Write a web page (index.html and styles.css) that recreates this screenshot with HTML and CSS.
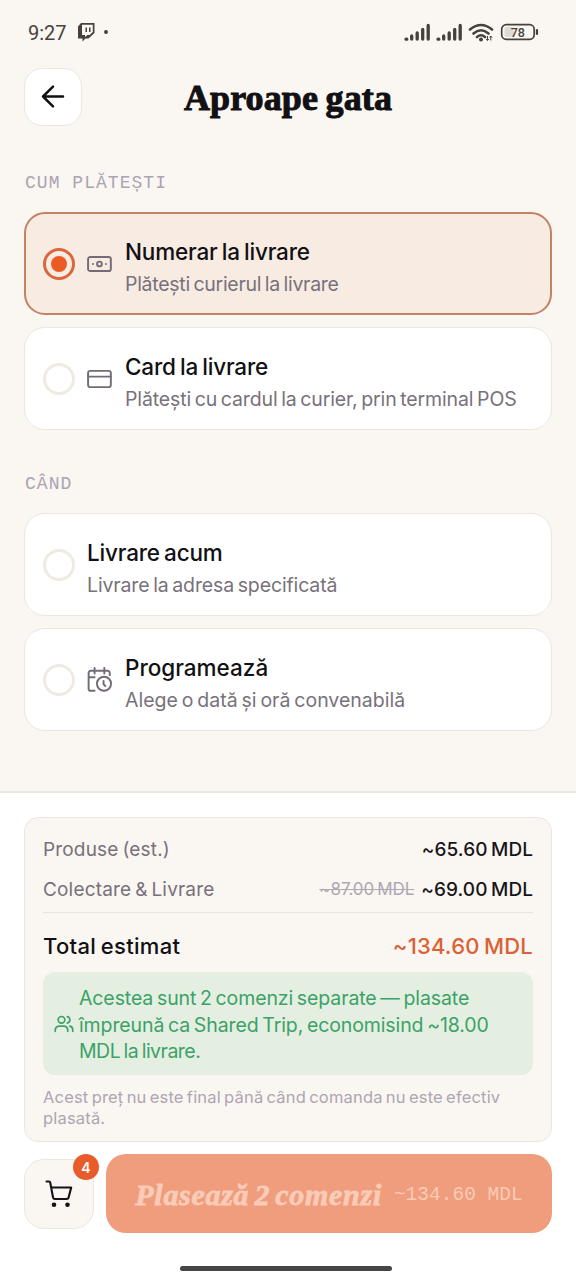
FILE: index.html
```html
<!DOCTYPE html>
<html lang="ro">
<head>
<meta charset="utf-8">
<title>Aproape gata</title>
<link rel="stylesheet" href="styles.css">
</head>
<body>
<div class="screen">
  <div class="status">
    <span class="clock">9:27</span>
    <svg class="twitch" width="18" height="20" viewBox="0 0 18 20"><path fill="#45423d" fill-rule="evenodd" d="M4 1H17.500V11L11.500 16.500H8.500L5.500 19.500V16.500H1V4.500ZM5 2.800V13H8V15L10.500 13H12.500L15.800 10V2.800ZM8.500 5.500H10V10H8.500ZM12 5.500H13.500V10H12Z"/></svg>
    <span class="dot"></span>
    <svg class="signals" width="136" height="22" viewBox="0 0 136 22">
      <g stroke="#45423d" stroke-width="3.300" stroke-linecap="round"><path d="M2 17.200h.8M7.700 17v-3M13.200 17v-6M18.700 17V7.500M24.200 17V3.500M34 17.200h.8M39.700 17v-3M45.200 17v-6M50.700 17V7.500M56.200 17V3.500"/></g>
      <g fill="none" stroke="#45423d" stroke-width="2.600" stroke-linecap="round"><path d="M66 7.500Q77-1.500 88 7.500M69.500 11.500Q77 5 84.500 11.500M73 15Q77 11.500 81 15"/></g>
      <circle cx="77" cy="17.500" r="2" fill="#45423d"/>
      <path d="M83.500 14v4.500M82.200 17l1.300 1.500 1.300-1.500M86.800 18.500V14M85.500 15.500l1.300-1.500 1.300 1.500" stroke="#45423d" fill="none"/>
      <rect x="97.700" y="2.700" width="32.500" height="14.600" rx="4.500" fill="none" stroke="#45423d" stroke-width="1.700"/>
      <rect x="100.500" y="5" width="9" height="10" rx="2" fill="#dedad4"/>
      <path d="M133 8v4" stroke="#45423d" stroke-width="2.200" stroke-linecap="round"/>
      <text class="battery" x="113.800" y="14.500" text-anchor="middle">78</text>
    </svg>
  </div>
  <div class="header">
    <button class="back" aria-label="Înapoi"><svg width="26" height="26" viewBox="0 0 26 26" fill="none" stroke="#111" stroke-width="2.500" stroke-linecap="round" stroke-linejoin="round"><path d="M23 12.500H3M13 2.700L3 12.500l10 9.800"/></svg></button>
    <h1 class="title">Aproape gata</h1>
  </div>
  <div class="content">
    <div class="label">CUM PLĂTEȘTI</div>
    <div class="card selected">
      <span class="radio"></span>
      <svg class="icon" width="26" height="26" viewBox="0 0 24 24"><rect x="1" y="5.500" width="21" height="13" rx="2"/><circle cx="11.500" cy="12" r="2.200"/><path d="M5.500 12h.01M17.500 12h.01"/></svg>
      <div class="copy"><div class="name">Numerar la livrare</div><div class="sub tight">Plătești curierul la livrare</div></div>
    </div>
    <div class="card">
      <span class="radio"></span>
      <svg class="icon" width="26" height="26" viewBox="0 0 24 24"><rect x="1" y="4.500" width="21" height="15" rx="2"/><path d="M1 9.800h21"/></svg>
      <div class="copy"><div class="name">Card la livrare</div><div class="sub">Plătești cu cardul la curier, prin terminal POS</div></div>
    </div>
    <div class="label second">CÂND</div>
    <div class="card">
      <span class="radio"></span>
      <div class="copy"><div class="name">Livrare acum</div><div class="sub">Livrare la adresa specificată</div></div>
    </div>
    <div class="card">
      <span class="radio"></span>
      <svg class="icon" width="26" height="26" viewBox="0 0 24 24"><path d="M21 7.500V5.500a2 2 0 0 0-2-2H3.500a2 2 0 0 0-2 2V20a2 2 0 0 0 2 2H7M16 1v5M7 1v5M1.500 9.500H7M17 17.500l-1.700-1.500V13"/><circle cx="15.700" cy="15.500" r="6.500"/></svg>
      <div class="copy"><div class="name even">Programează</div><div class="sub even">Alege o dată și oră convenabilă</div></div>
    </div>
  </div>
  <div class="panel">
    <div class="summary">
      <div class="row"><span>Produse (est.)</span><b>~65.60 MDL</b></div>
      <div class="row"><span>Colectare &amp; Livrare</span><span class="prices"><s>~87.00 MDL</s><b>~69.00 MDL</b></span></div>
      <div class="total"><span>Total estimat</span><span class="sum">~134.60 MDL</span></div>
      <div class="notice">
        <svg width="20" height="20" viewBox="0 0 24 24"><circle cx="9" cy="7" r="4"/><path d="M1.500 21v-2a5 5 0 0 1 5-4.500h5a5 5 0 0 1 5 4.500v2M16 3.100a4 4 0 0 1 0 7.800M22.500 21v-2a4.500 4.500 0 0 0-3.500-4.400"/></svg>
        <div>Acestea sunt 2 comenzi separate — plasate<br>împreună ca Shared Trip, economisind ~18.00<br><span class="last">MDL la livrare.</span></div>
      </div>
      <div class="note">Acest preț nu este final până când comanda nu este efectiv<br>plasată.</div>
    </div>
    <div class="actions">
      <button class="cart" aria-label="Coș"><svg width="28" height="28" viewBox="0 0 28 28"><path d="M1.500 1.500h2.500q1 0 1.200 1L8 17.300q.3 1.700 2 1.700h11.500q1.700 0 2.100-1.600L26.200 7.500H6"/><circle cx="9" cy="24.700" r="2.300"/><circle cx="22.500" cy="24.700" r="2.300"/></svg><span class="badge">4</span></button>
      <button class="submit"><span class="cta">Plasează 2 comenzi</span><span class="amount">~134.60 MDL</span></button>
    </div>
    <div class="home"></div>
  </div>
</div>
</body>
</html>
```
FILE: styles.css
```css
* { box-sizing: border-box; }
body { margin: 0; background: #faf6f1; font-family: Inter, "Noto Sans", sans-serif; color: #111014; }
button { font: inherit; padding: 0; border: 0; }
.screen { width: 576px; height: 1280px; display: flex; flex-direction: column; overflow: hidden; }
.status { height: 68px; padding: 22px 36px 0 28px; display: flex; align-items: flex-start; }
.clock { font: 20px/22px Roboto, sans-serif; color: #45423d; }
.twitch { margin-left: 10px; }
.dot { width: 4px; height: 4px; border-radius: 50%; background: #45423d; margin: 8px 0 0 9px; }
.signals { margin-left: auto; }
.battery { font: 500 12.5px Roboto, sans-serif; fill: #45423d; }
.header { height: 58px; padding: 0 24px; display: grid; grid-template-columns: 58px 1fr 58px; }
.back { width: 58px; height: 58px; background: #fff; border: 1px solid #ece8df; border-radius: 18px; display: grid; place-items: center; }
.title { margin: 0; font: bold 36px/58px "Liberation Serif", serif; letter-spacing: .1px; word-spacing: -1.5px; text-align: center; white-space: nowrap; padding-top: 1px; -webkit-text-stroke: 1px #111014; }
.content { padding: 46px 24px 0; height: 665px; }
.label { height: 22px; margin-bottom: 18px; padding-left: 1px; font: 18px/22px "Liberation Mono", monospace; letter-spacing: 1.03px; color: #aaa4b3; }
.second { margin-top: 43px; }
.card { height: 103px; margin-bottom: 12px; padding: 0 18px; display: flex; align-items: center; background: #fff; border: 1px solid #ece8df; border-radius: 21px; }
.selected { background: #f8ebe2; border: 2px solid #c28363; padding: 0 17px; }
.radio { flex: none; width: 32px; height: 32px; border: 3px solid #efeae2; border-radius: 50%; margin-right: 12px; display: grid; place-items: center; }
.selected .radio { border-color: #d9683f; }
.selected .radio::after { content: ""; width: 16px; height: 16px; border-radius: 50%; background: #e95c26; }
.icon { margin-right: 12px; fill: none; stroke: #736c77; stroke-width: 1.8; stroke-linecap: round; stroke-linejoin: round; }
.copy { white-space: nowrap; word-spacing: -.1em; padding-top: 10px; }
.name { font-size: 22.5px; line-height: 32px; font-weight: 500; letter-spacing: -.19px; }
.sub { font-size: 19.5px; line-height: 33px; color: #77717b; letter-spacing: -.14px; }
.tight { letter-spacing: -.28px; }
.even { letter-spacing: 0; }
.panel { flex: 1; background: #fff; border-top: 2px solid #ece8df; padding: 24px 24px 0; }
.summary { height: 325px; border: 1px solid #ebe7df; border-radius: 14px; background: #faf6f1; padding: 11px 18px; white-space: nowrap; word-spacing: -.1em; }
.row { height: 40px; display: flex; justify-content: space-between; align-items: center; font-size: 19px; letter-spacing: .17px; color: #77717b; }
.row b { font-weight: 500; letter-spacing: .06px; color: #17151a; }
.prices { display: flex; align-items: center; gap: 7px; }
.row s { font-size: 17px; letter-spacing: -.07px; color: #aea8b3; }
.total { margin-top: 3px; height: 60px; border-top: 1px solid #e8e4dc; padding-top: 6px; display: flex; justify-content: space-between; align-items: center; font-size: 22px; font-weight: 500; letter-spacing: .32px; }
.sum { color: #db6137; letter-spacing: .19px; }
.notice { height: 103px; border-radius: 12px; background: #e4efe2; color: #3ba267; display: flex; align-items: center; padding: 3px 0 0 11px; gap: 5px; font-size: 19.5px; line-height: 26.7px; letter-spacing: -.11px; }
.notice svg { fill: none; stroke: #3ba267; stroke-width: 2; stroke-linecap: round; margin-bottom: 3px; }
.last { letter-spacing: -.5px; }
.note { margin-top: 12px; font-size: 16.5px; line-height: 21px; letter-spacing: .18px; color: #aea5b2; }
.actions { margin-top: 12px; display: flex; align-items: center; gap: 12px; }
.cart { position: relative; width: 70px; height: 70px; border-radius: 20px; border: 1px solid #ece8df; background: #faf7f2; display: grid; place-items: center; }
.cart svg { fill: none; stroke: #141216; stroke-width: 2.1; stroke-linecap: round; stroke-linejoin: round; }
.cart circle { fill: #141216; stroke: none; }
.badge { position: absolute; right: -6px; top: -6px; width: 26px; height: 26px; border-radius: 50%; background: #e85c2b; color: #fff; font: 600 14px/27px Inter, sans-serif; text-align: center; }
.submit { width: 446px; height: 79px; border-radius: 20px; background: #f09d7d; color: #facbb7; display: flex; align-items: center; justify-content: center; gap: 12px; white-space: nowrap; }
.cta { font: italic bold 30px/36px "Liberation Serif", serif; letter-spacing: .7px; word-spacing: -3px; padding-top: 3px; -webkit-text-stroke: .8px #facbb7; }
.amount { font: 19.5px/24px "Liberation Mono", monospace; padding-top: 3px; }
.home { width: 212px; height: 5px; border-radius: 3px; background: #454545; margin: 33px auto 0 156px; }
```
